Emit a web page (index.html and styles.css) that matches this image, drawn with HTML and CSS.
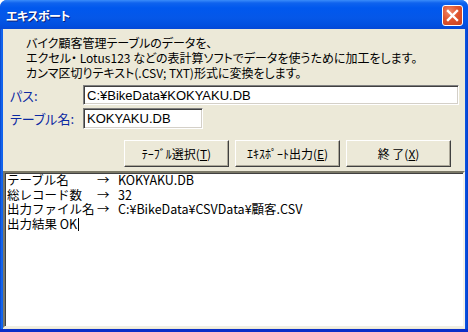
FILE: index.html
```html
<!DOCTYPE html>
<html lang="ja">
<head>
    <meta charset="UTF-8">
    <title>エキスポート</title>
    <link rel="stylesheet" href="styles.css">
</head>
<body>

<div class="window">
    <div class="titlebar">
        <span class="title">エキスポート</span>
        <button class="close" title="閉じる">
            <svg width="13" height="13" viewBox="0 0 13 13">
                <path d="M2 2 L11 11 M11 2 L2 11" stroke="#fff" stroke-width="2.4" stroke-linecap="square"/>
            </svg>
        </button>
    </div>

    <div class="client">
        <div class="intro">
            <div>バイク顧客管理テーブルのデータを、</div>
            <div>エクセル・ Lotus123 などの表計算ソフトでデータを使うために加工をします。</div>
            <div>カンマ区切りテキスト(.CSV; TXT)形式に変換をします。</div>
        </div>

        <div class="form-row first">
            <label for="path">パス:</label>
            <input type="text" id="path" class="field wide" value="C:¥BikeData¥KOKYAKU.DB">
        </div>
        <div class="form-row">
            <label for="table">テーブル名:</label>
            <input type="text" id="table" class="field short" value="KOKYAKU.DB">
        </div>

        <div class="buttons">
            <button class="button">ﾃｰﾌﾞﾙ選択(<u>T</u>)</button>
            <button class="button">ｴｷｽﾎﾟｰﾄ出力(<u>E</u>)</button>
            <button class="button">終 了(<u>X</u>)</button>
        </div>

        <div class="log">
            <div class="log-row"><span class="key">テーブル名</span><span class="arrow">→</span><span>KOKYAKU.DB</span></div>
            <div class="log-row"><span class="key">総レコード数</span><span class="arrow">→</span><span>32</span></div>
            <div class="log-row"><span class="key">出力ファイル名</span><span class="arrow">→</span><span>C:¥BikeData¥CSVData¥顧客.CSV</span></div>
            <div class="log-row"><span class="done">出力結果 OK<span class="caret"></span></span></div>
        </div>
    </div>
</div>

</body>
</html>
```

FILE: styles.css
```css
html, body {
    margin: 0;
    padding: 0;
}
body {
    width: 468px;
    height: 332px;
    overflow: hidden;
    font-family: "Noto Sans CJK JP", "Liberation Sans", sans-serif;
    font-size: 12px;
    background: #ffffff;
}
.window {
    height: 332px;
    box-sizing: border-box;
    display: flex;
    flex-direction: column;
    padding: 0 3px 3px 3px;
    border-radius: 7px 7px 0 0;
    background: linear-gradient(to right, #0842c8 0px, #166ff5 2px, #0855e6 3px, #0855e6 465px, #0740c9 468px);
    box-shadow: inset 0 -3px 0 #0a2fc8;
}
.titlebar {
    height: 29px;
    flex-shrink: 0;
    margin: 0 -3px;
    padding: 0 5px 0 6px;
    display: flex;
    align-items: center;
    justify-content: space-between;
    border-radius: 7px 7px 0 0;
    background: linear-gradient(to bottom, #3a8cfa 0px, #0f63ee 3px, #0058ee 8px, #0557e8 18px, #0150e0 25px, #0548d6 29px);
}
.title {
    color: #ffffff;
    font-weight: bold;
    font-size: 12px;
    letter-spacing: -0.5px;
    font-feature-settings: "palt";
    text-shadow: 1px 1px 0 #0a1e7a;
    margin-top: 1px;
}
.close {
    width: 21px;
    height: 21px;
    padding: 0;
    border: 1px solid #ffffff;
    border-radius: 3px;
    background: radial-gradient(circle at 35% 30%, #f08a6c 0%, #e0552f 45%, #c9401c 100%);
    display: flex;
    align-items: center;
    justify-content: center;
    margin-top: 2px;
}
.client {
    flex: 1;
    background: #ece9d8;
    display: flex;
    flex-direction: column;
    min-height: 0;
}
.intro {
    padding: 6px 0 0 23px;
    line-height: 15px;
    color: #000000;
    font-feature-settings: "palt";
}
.form-row {
    display: flex;
    align-items: center;
    height: 20px;
    margin-top: 3px;
}
.form-row.first {
    margin-top: 5px;
}
.form-row label {
    width: 73px;
    padding-left: 7px;
    color: #0c2aa2;
    font-size: 13px;
    font-feature-settings: "palt";
}
.field {
    height: 20px;
    box-sizing: border-box;
    padding: 0 3px;
    font-family: "Liberation Sans", "Noto Sans CJK JP", sans-serif;
    font-size: 13px;
    color: #000000;
    background: #ffffff;
    border: 1px solid;
    border-color: #808080 #ffffff #ffffff #808080;
    box-shadow: inset 1px 1px 0 #404040, inset -1px -1px 0 #d4d0c8;
    outline: none;
}
.field.wide {
    width: 376px;
}
.field.short {
    width: 120px;
    height: 21px;
}
.buttons {
    display: flex;
    justify-content: flex-end;
    gap: 6px;
    padding-right: 14px;
    margin-top: 12px;
}
.button {
    width: 105px;
    height: 27px;
    padding: 0;
    font-family: "Noto Sans CJK JP", sans-serif;
    font-size: 12px;
    color: #000000;
    background: #ece9d8;
    border: 1px solid;
    border-color: #ffffff #404040 #404040 #ffffff;
    box-shadow: inset -1px -1px 0 #aca899;
}
.log {
    flex: 1;
    margin-top: 4px;
    margin-bottom: 1px;
    background: #ffffff;
    border: 2px solid;
    border-color: #7a7867 #f4f2ea #f1efe2 #7a7867;
    box-shadow: inset 1px 1px 0 #404040;
    padding: 0 2px;
    font-size: 12.5px;
    line-height: 14.5px;
    color: #000000;
}
.log-row {
    display: flex;
    white-space: nowrap;
}
.key {
    width: 90px;
    flex-shrink: 0;
}
.arrow {
    width: 21px;
    flex-shrink: 0;
}
.caret {
    display: inline-block;
    width: 1px;
    height: 13px;
    background: #000000;
    vertical-align: -2px;
    margin-left: 1px;
}
```
